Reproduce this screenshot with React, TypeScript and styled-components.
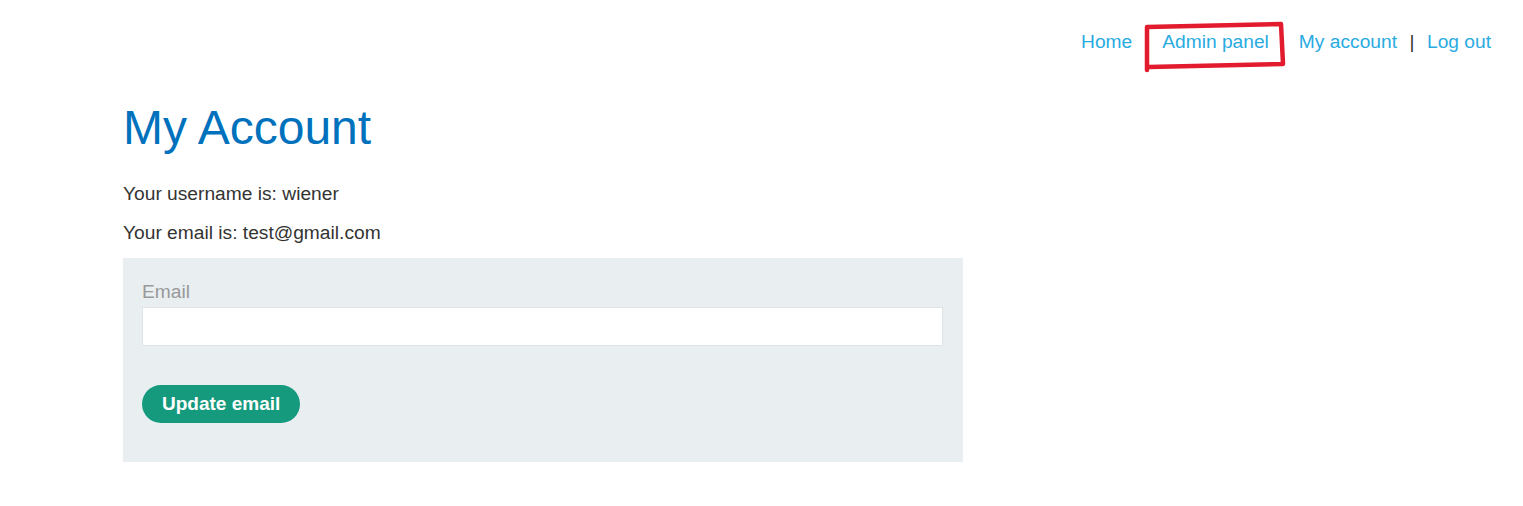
import React from 'react';
import styled, { createGlobalStyle } from 'styled-components';

const GlobalStyle = createGlobalStyle`
    body {
        margin: 0;
        background: #fff;
        font-family: "Liberation Sans", Arial, sans-serif;
        color: #333332;
    }
`;

const Page = styled.div`
    min-height: 506px;
`;

const Header = styled.nav`
    display: flex;
    justify-content: flex-end;
    align-items: center;
    gap: 12.5px;

    padding: 30px 32px 0 0;

    font-size: 19.2px;
    line-height: 23px;
`;

const NavLink = styled.a`
    position: relative;
    color: #29abe2;
    text-decoration: none;
`;

const Separator = styled.span<{ $hidden?: boolean }>`
    color: ${props => (props.$hidden ? 'transparent' : '#333332')};
`;

const Marker = styled.svg`
    position: absolute;
    left: -18px;
    top: -10px;
    width: 142px;
    height: 52px;
    overflow: visible;
    pointer-events: none;
`;

const Content = styled.main`
    padding: 46px 0 0 123px;
    width: 840px;
`;

const Title = styled.h1`
    margin: 0;

    font-weight: 400;
    font-size: 48px;
    line-height: 58px;

    color: #0071bc;
`;

const Text = styled.p`
    margin: 0;
    font-size: 19.2px;
    line-height: 23px;

    & + & {
        margin-top: 16px;
    }

    &:first-of-type {
        margin-top: 25px;
    }
`;

const Form = styled.form`
    display: flex;
    flex-direction: column;
    align-items: flex-start;

    margin-top: 14px;
    padding: 22px 20px 39px 19px;

    background: #e9eef1;
`;

const Label = styled.label`
    font-size: 19.2px;
    line-height: 23px;
    color: #999;
`;

const Input = styled.input`
    box-sizing: border-box;
    width: 100%;
    height: 39px;
    margin-top: 4px;

    border: 1px solid #dfe3e5;
    background: #fff;
`;

const Button = styled.button`
    height: 38px;
    margin-top: 39px;
    padding: 0 20px;

    border: none;
    border-radius: 19px;
    background: #169a7e;

    font-family: "Liberation Sans", Arial, sans-serif;
    font-weight: 700;
    font-size: 19px;
    color: #fff;
`;

export default function App() {
    return (
        <Page>
            <GlobalStyle />
            <Header>
                <NavLink href="#">Home</NavLink>
                <Separator $hidden>|</Separator>
                <NavLink href="#">
                    Admin panel
                    <Marker viewBox="0 0 142 52">
                        <path
                            d="M3 50 L3 7 L137 4 L139 44 L5 47"
                            fill="none"
                            stroke="#e31b2e"
                            strokeWidth="4.5"
                            strokeLinejoin="round"
                            strokeLinecap="round"
                        />
                    </Marker>
                </NavLink>
                <Separator $hidden>|</Separator>
                <NavLink href="#">My account</NavLink>
                <Separator>|</Separator>
                <NavLink href="#">Log out</NavLink>
            </Header>
            <Content>
                <Title>My Account</Title>
                <Text>Your username is: wiener</Text>
                <Text>Your email is: test@gmail.com</Text>
                <Form onSubmit={e => e.preventDefault()}>
                    <Label>Email</Label>
                    <Input type="email" />
                    <Button type="submit">Update email</Button>
                </Form>
            </Content>
        </Page>
    );
}
